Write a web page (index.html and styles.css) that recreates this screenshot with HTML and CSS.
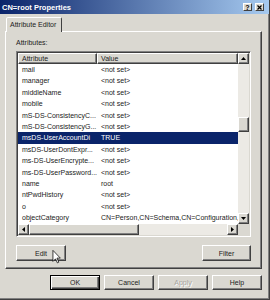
FILE: index.html
```html
<!DOCTYPE html>
<html lang="en">
<head>
  <meta charset="UTF-8">
  <title>CN=root Properties</title>
  <link rel="stylesheet" href="styles.css">
</head>
<body>

  <div class="window">
    <div class="titlebar">
      <span class="title">CN=root Properties</span>
      <div class="cap-btns">
        <span class="cap-btn">?</span>
        <span class="cap-btn">
          <svg width="5" height="5" viewBox="0 0 5 5"><path d="M0.5 0.5 L4.5 4.5 M4.5 0.5 L0.5 4.5" stroke="#000" stroke-width="1.2"/></svg>
        </span>
      </div>
    </div>

    <div class="content">
      <div class="tab">Attribute Editor</div>

      <div class="panel">
        <div class="label">Attributes:</div>

        <div class="listview">
          <div class="lv-main">
            <div class="lv-header">
              <div class="col-h attr">Attribute</div>
              <div class="col-h val">Value</div>
            </div>
            <div class="row"><span class="a">mail</span><span class="v">&lt;not set&gt;</span></div>
            <div class="row"><span class="a">manager</span><span class="v">&lt;not set&gt;</span></div>
            <div class="row"><span class="a">middleName</span><span class="v">&lt;not set&gt;</span></div>
            <div class="row"><span class="a">mobile</span><span class="v">&lt;not set&gt;</span></div>
            <div class="row"><span class="a">mS-DS-ConsistencyC...</span><span class="v">&lt;not set&gt;</span></div>
            <div class="row"><span class="a">mS-DS-ConsistencyG...</span><span class="v">&lt;not set&gt;</span></div>
            <div class="row sel"><span class="a">msDS-UserAccountDi</span><span class="v">TRUE</span></div>
            <div class="row"><span class="a">msDS-UserDontExpr...</span><span class="v">&lt;not set&gt;</span></div>
            <div class="row"><span class="a">ms-DS-UserEncrypte...</span><span class="v">&lt;not set&gt;</span></div>
            <div class="row"><span class="a">ms-DS-UserPassword...</span><span class="v">&lt;not set&gt;</span></div>
            <div class="row"><span class="a">name</span><span class="v">root</span></div>
            <div class="row"><span class="a">ntPwdHistory</span><span class="v">&lt;not set&gt;</span></div>
            <div class="row"><span class="a">o</span><span class="v">&lt;not set&gt;</span></div>
            <div class="row"><span class="a">objectCategory</span><span class="v">CN=Person,CN=Schema,CN=Configuration,CN=root</span></div>
            <div class="row"><span class="a">objectClass</span><span class="v">top;person;organizationalPerson;user</span></div>
          </div>

          <div class="vscroll">
            <div class="sb-btn">
              <svg width="5" height="3" viewBox="0 0 5 3"><path d="M2.5 0 L5 3 L0 3 Z" fill="#000"/></svg>
            </div>
            <div class="sb-track">
              <div class="sb-btn v-thumb"></div>
            </div>
            <div class="sb-btn">
              <svg width="5" height="3" viewBox="0 0 5 3"><path d="M0 0 L5 0 L2.5 3 Z" fill="#000"/></svg>
            </div>
          </div>

          <div class="hscroll">
            <div class="sb-btn">
              <svg width="3" height="5" viewBox="0 0 3 5"><path d="M3 0 L3 5 L0 2.5 Z" fill="#000"/></svg>
            </div>
            <div class="sb-track h-track">
              <div class="sb-btn h-thumb"></div>
            </div>
            <div class="sb-btn">
              <svg width="3" height="5" viewBox="0 0 3 5"><path d="M0 0 L3 2.5 L0 5 Z" fill="#000"/></svg>
            </div>
          </div>

          <div class="corner"></div>
        </div>

        <div class="panel-btns">
          <div class="edit-wrap">
            <button class="btn">Edit</button>
            <svg class="cursor" width="10" height="14" viewBox="0 0 12 19">
              <path d="M0.5 0.5 L0.5 15.5 L4 12 L6.5 17.5 L8.5 16.5 L6 11 L10.5 11 Z" fill="#fff" stroke="#000" stroke-width="1"/>
            </svg>
          </div>
          <button class="btn filter">Filter</button>
        </div>
      </div>

      <div class="dialog-btns">
        <button class="btn default">OK</button>
        <button class="btn">Cancel</button>
        <button class="btn" disabled>Apply</button>
        <button class="btn">Help</button>
      </div>
    </div>
  </div>

</body>
</html>
```

FILE: styles.css
```css
body { margin: 0; font-family: "Liberation Sans", Arial, sans-serif; font-size: 7px; color: #222; background: #fff; }

.window {
  width: 270px;
  height: 300px;
  box-sizing: border-box;
  background: #dad8d1;
  border-right: 1px solid #404040;
  border-bottom: 1px solid #404040;
  box-shadow: inset -1px -1px #808080;
  display: flex;
  flex-direction: column;
}

/* title bar */
.titlebar {
  height: 14px;
  flex: none;
  display: flex;
  align-items: center;
  padding: 0 5px 0 2px;
  background: linear-gradient(to right, #0a246a, #a6caf0);
}
.title { flex: 1; color: #fff; font-weight: bold; font-size: 7.5px; }
.cap-btns { display: flex; gap: 3px; }
.cap-btn {
  width: 9px;
  height: 8px;
  box-sizing: border-box;
  background: #dad8d1;
  border: 1px solid;
  border-color: #fff #404040 #404040 #fff;
  display: flex;
  align-items: center;
  justify-content: center;
  font-size: 7px;
  font-weight: bold;
  line-height: 1;
  color: #000;
}

/* tab + panel */
.content { flex: 1; padding: 3px 7px 0 5px; }
.tab {
  position: relative;
  z-index: 1;
  width: 56px;
  height: 15px;
  margin: 0 0 -1px 1px;
  box-sizing: border-box;
  border: 1px solid;
  border-bottom: none;
  border-color: #fff #404040 transparent #fff;
  border-radius: 2px 2px 0 0;
  background: #dad8d1;
  padding-left: 3px;
  line-height: 13px;
}
.panel {
  height: 238px;
  box-sizing: border-box;
  border: 1px solid;
  border-color: #fff #404040 #404040 #fff;
  box-shadow: inset -1px -1px #808080;
  padding: 6px 10px 0 10px;
}
.label { line-height: 10px; margin-bottom: 3px; }

/* list view */
.listview {
  height: 186px;
  box-sizing: border-box;
  border: 1px solid;
  border-color: #808080 #fff #fff #808080;
  padding: 1px;
  box-shadow: inset 1px 1px #404040, inset -1px -1px #dad8d1;
  background: #fff;
  display: grid;
  grid-template-columns: 1fr 11px;
  grid-template-rows: 1fr 11px;
}
.lv-main { overflow: hidden; min-width: 0; background: #fff; }
.lv-header { display: flex; height: 11px; }
.col-h {
  box-sizing: border-box;
  border: 1px solid;
  border-color: #fff #404040 #404040 #fff;
  box-shadow: inset -1px -1px #808080;
  background: #dad8d1;
  padding-left: 3px;
  line-height: 9px;
}
.col-h.attr { width: 79px; flex: none; }
.col-h.val { flex: 1; }

.row { display: flex; height: 11.4px; line-height: 11.4px; white-space: nowrap; }
.row .a { width: 79px; flex: none; box-sizing: border-box; padding-left: 4px; overflow: hidden; }
.row .v { padding-left: 4px; }
.row.sel { background: #0a246a; color: #fff; }

/* scrollbars */
.sb-btn {
  flex: none;
  width: 11px;
  height: 11px;
  box-sizing: border-box;
  border: 1px solid;
  border-color: #fff #404040 #404040 #fff;
  box-shadow: inset -1px -1px #808080;
  background: #dad8d1;
  display: flex;
  align-items: center;
  justify-content: center;
}
.vscroll { display: flex; flex-direction: column; }
.hscroll { display: flex; }
.sb-track { flex: 1; background: #eceae5; }
.v-thumb { margin-top: 53px; height: 15px; }
.h-track { display: flex; }
.h-thumb { width: 110px; }
.corner { background: #dad8d1; }

/* buttons */
.panel-btns { display: flex; justify-content: space-between; margin-top: 8px; }
.edit-wrap { position: relative; }
.cursor { position: absolute; left: 36px; top: 5px; }

.btn {
  width: 50px;
  height: 16px;
  box-sizing: border-box;
  padding: 0;
  border: 1px solid;
  border-color: #fff #404040 #404040 #fff;
  box-shadow: inset -1px -1px #808080;
  background: #dad8d1;
  font-family: inherit;
  font-size: 7px;
  color: #222;
}
.btn.filter { width: 49px; }
.btn.default {
  border-color: #000;
  box-shadow: inset 1px 1px #fff, inset -1px -1px #404040, inset -2px -2px #808080;
}
.btn:disabled { color: #a7a59e; text-shadow: 1px 1px #fff; }

.dialog-btns { display: flex; justify-content: flex-end; gap: 4px; margin-top: 6px; }
.dialog-btns .btn { height: 15px; }
```
